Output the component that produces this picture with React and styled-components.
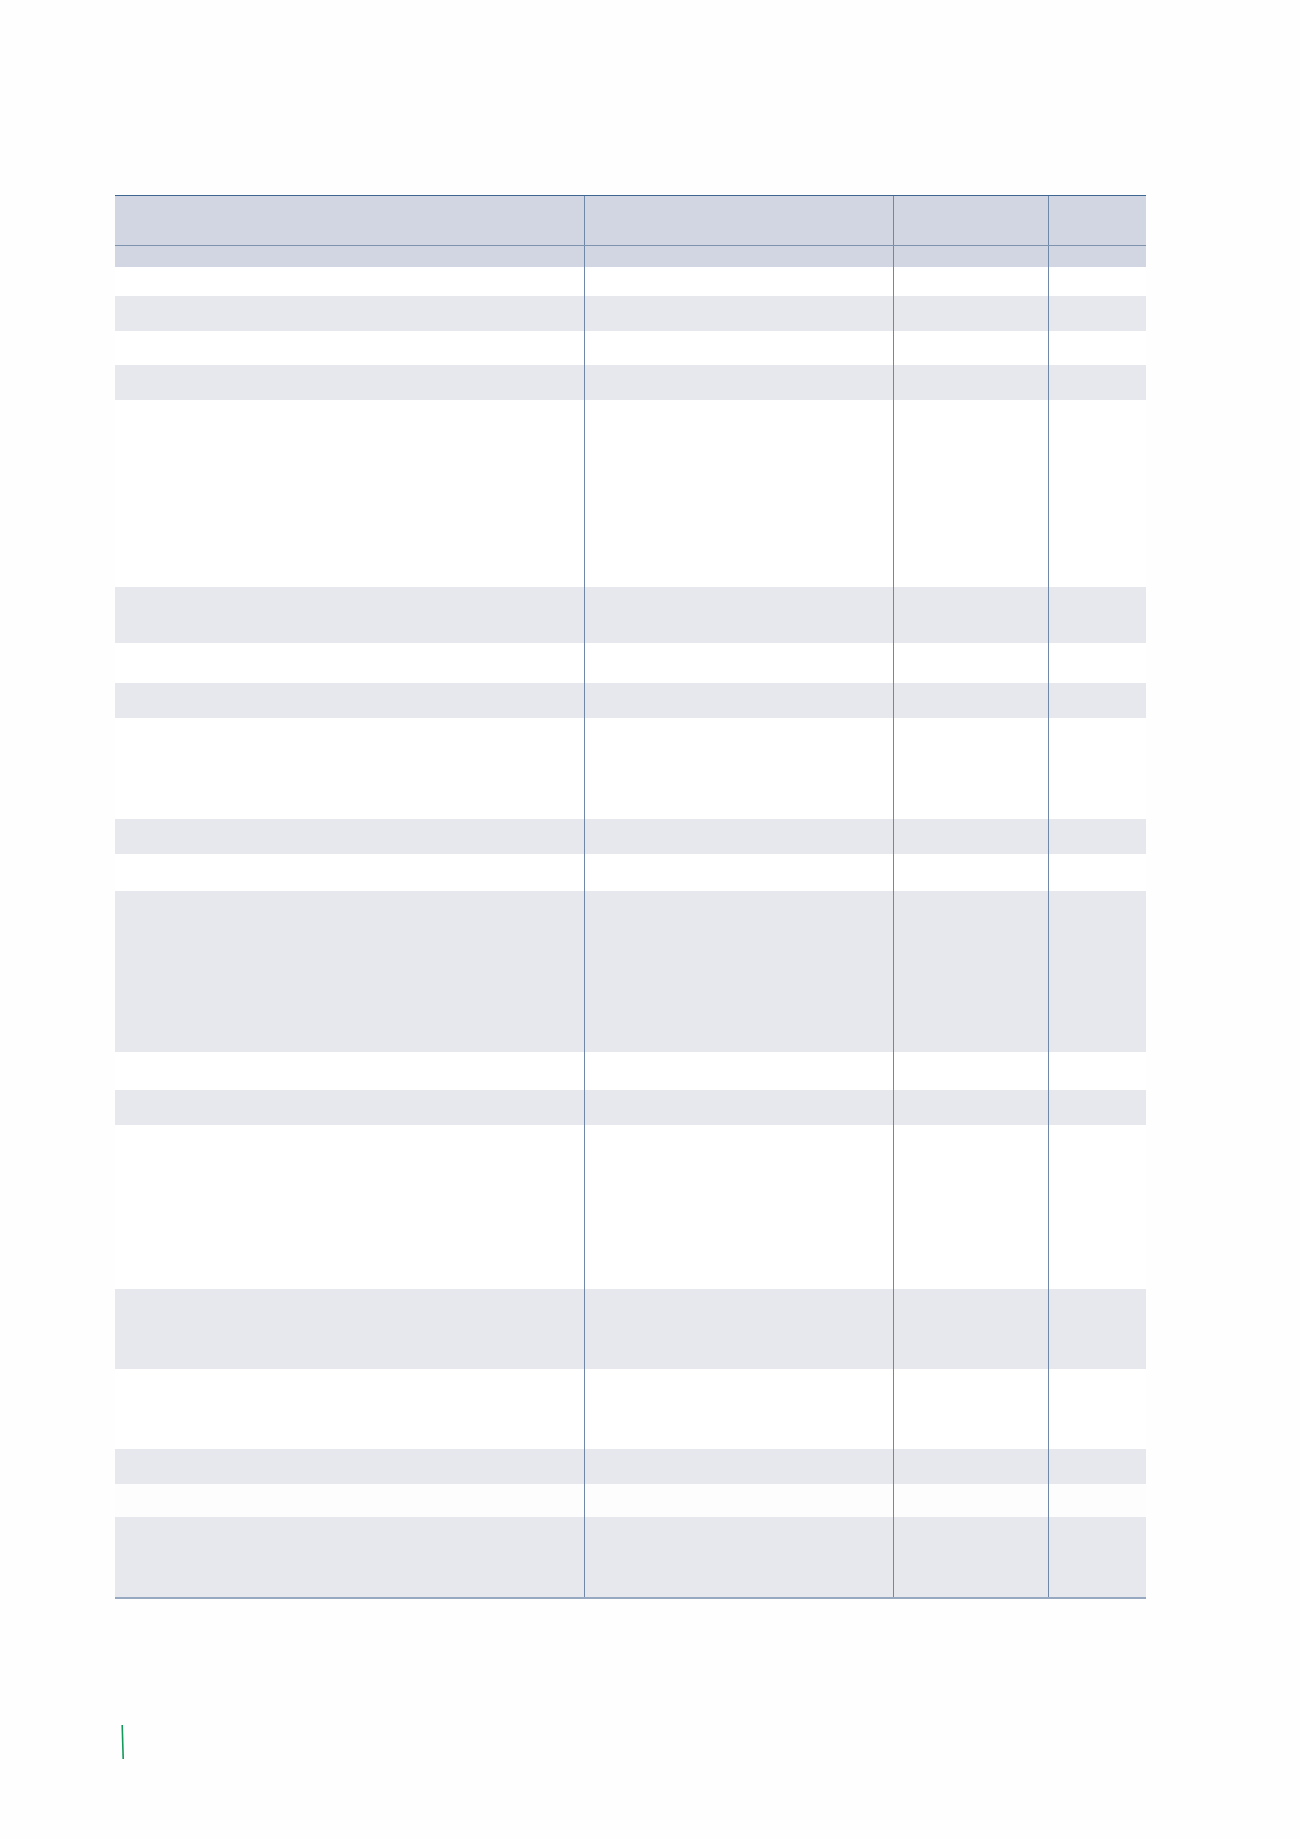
import React from "react";
import styled, { createGlobalStyle } from "styled-components";

const Global = createGlobalStyle`
  html, body { margin: 0; padding: 0; background: #fefefe; }
  body { font-family: "Liberation Sans", Arial, sans-serif; }
`;

const Page = styled.div`
  width: 1300px;
  min-height: 1839px;
  box-sizing: border-box;
  padding: 195px 0 0 115px;
  display: flex;
  flex-direction: column;
`;

const Table = styled.div`
  width: 1031px;
  display: flex;
  flex-direction: column;
  border-bottom: 2px solid #96a9c1;
`;

const Row = styled.div`
  display: flex;
  height: ${(p) => p.$h}px;
  background: ${(p) =>
    p.$tone === "head" ? "#d1d6e2" : p.$tone === "gray" ? "#e7e8ee" : p.$tone === "off" ? "#fdfdfd" : "#ffffff"};
  border-top: ${(p) => (p.$top ? "1px solid #3d6690" : "none")};
  border-bottom: ${(p) => (p.$bottom ? "1px solid #7d93ae" : "none")};
`;

const Cell = styled.div`
  width: ${(p) => p.$w}px;
  box-sizing: border-box;
  border-left: ${(p) => (p.$first ? "none" : "1px solid #6f88a7")};
`;

const Footer = styled.div`
  margin-top: 125px;
  padding-left: 6px;
  height: 36px;
`;

const cols = [469, 309, 155, 98];

const rows = [
  { h: 29, tone: "white" },
  { h: 35, tone: "gray" },
  { h: 34, tone: "white" },
  { h: 35, tone: "gray" },
  { h: 187, tone: "white" },
  { h: 56, tone: "gray" },
  { h: 40, tone: "white" },
  { h: 35, tone: "gray" },
  { h: 101, tone: "white" },
  { h: 35, tone: "gray" },
  { h: 37, tone: "white" },
  { h: 161, tone: "gray" },
  { h: 38, tone: "white" },
  { h: 35, tone: "gray" },
  { h: 164, tone: "white" },
  { h: 80, tone: "gray" },
  { h: 80, tone: "white" },
  { h: 35, tone: "gray" },
  { h: 33, tone: "off" },
  { h: 80, tone: "gray" },
];

function Cells() {
  return cols.map((w, i) => <Cell key={i} $w={w} $first={i === 0} />);
}

export default function App() {
  return (
    <>
      <Global />
      <Page>
        <Table>
          <Row $h={49} $tone="head" $top $bottom>
            <Cells />
          </Row>
          <Row $h={21} $tone="head">
            <Cells />
          </Row>
          {rows.map((r, i) => (
            <Row key={i} $h={r.h} $tone={r.tone}>
              <Cells />
            </Row>
          ))}
        </Table>
        <Footer>
          <svg width="4" height="36" viewBox="0 0 4 36">
            <line x1="1.2" y1="1" x2="2.2" y2="35" stroke="#13995a" strokeWidth="1.6" />
          </svg>
        </Footer>
      </Page>
    </>
  );
}
